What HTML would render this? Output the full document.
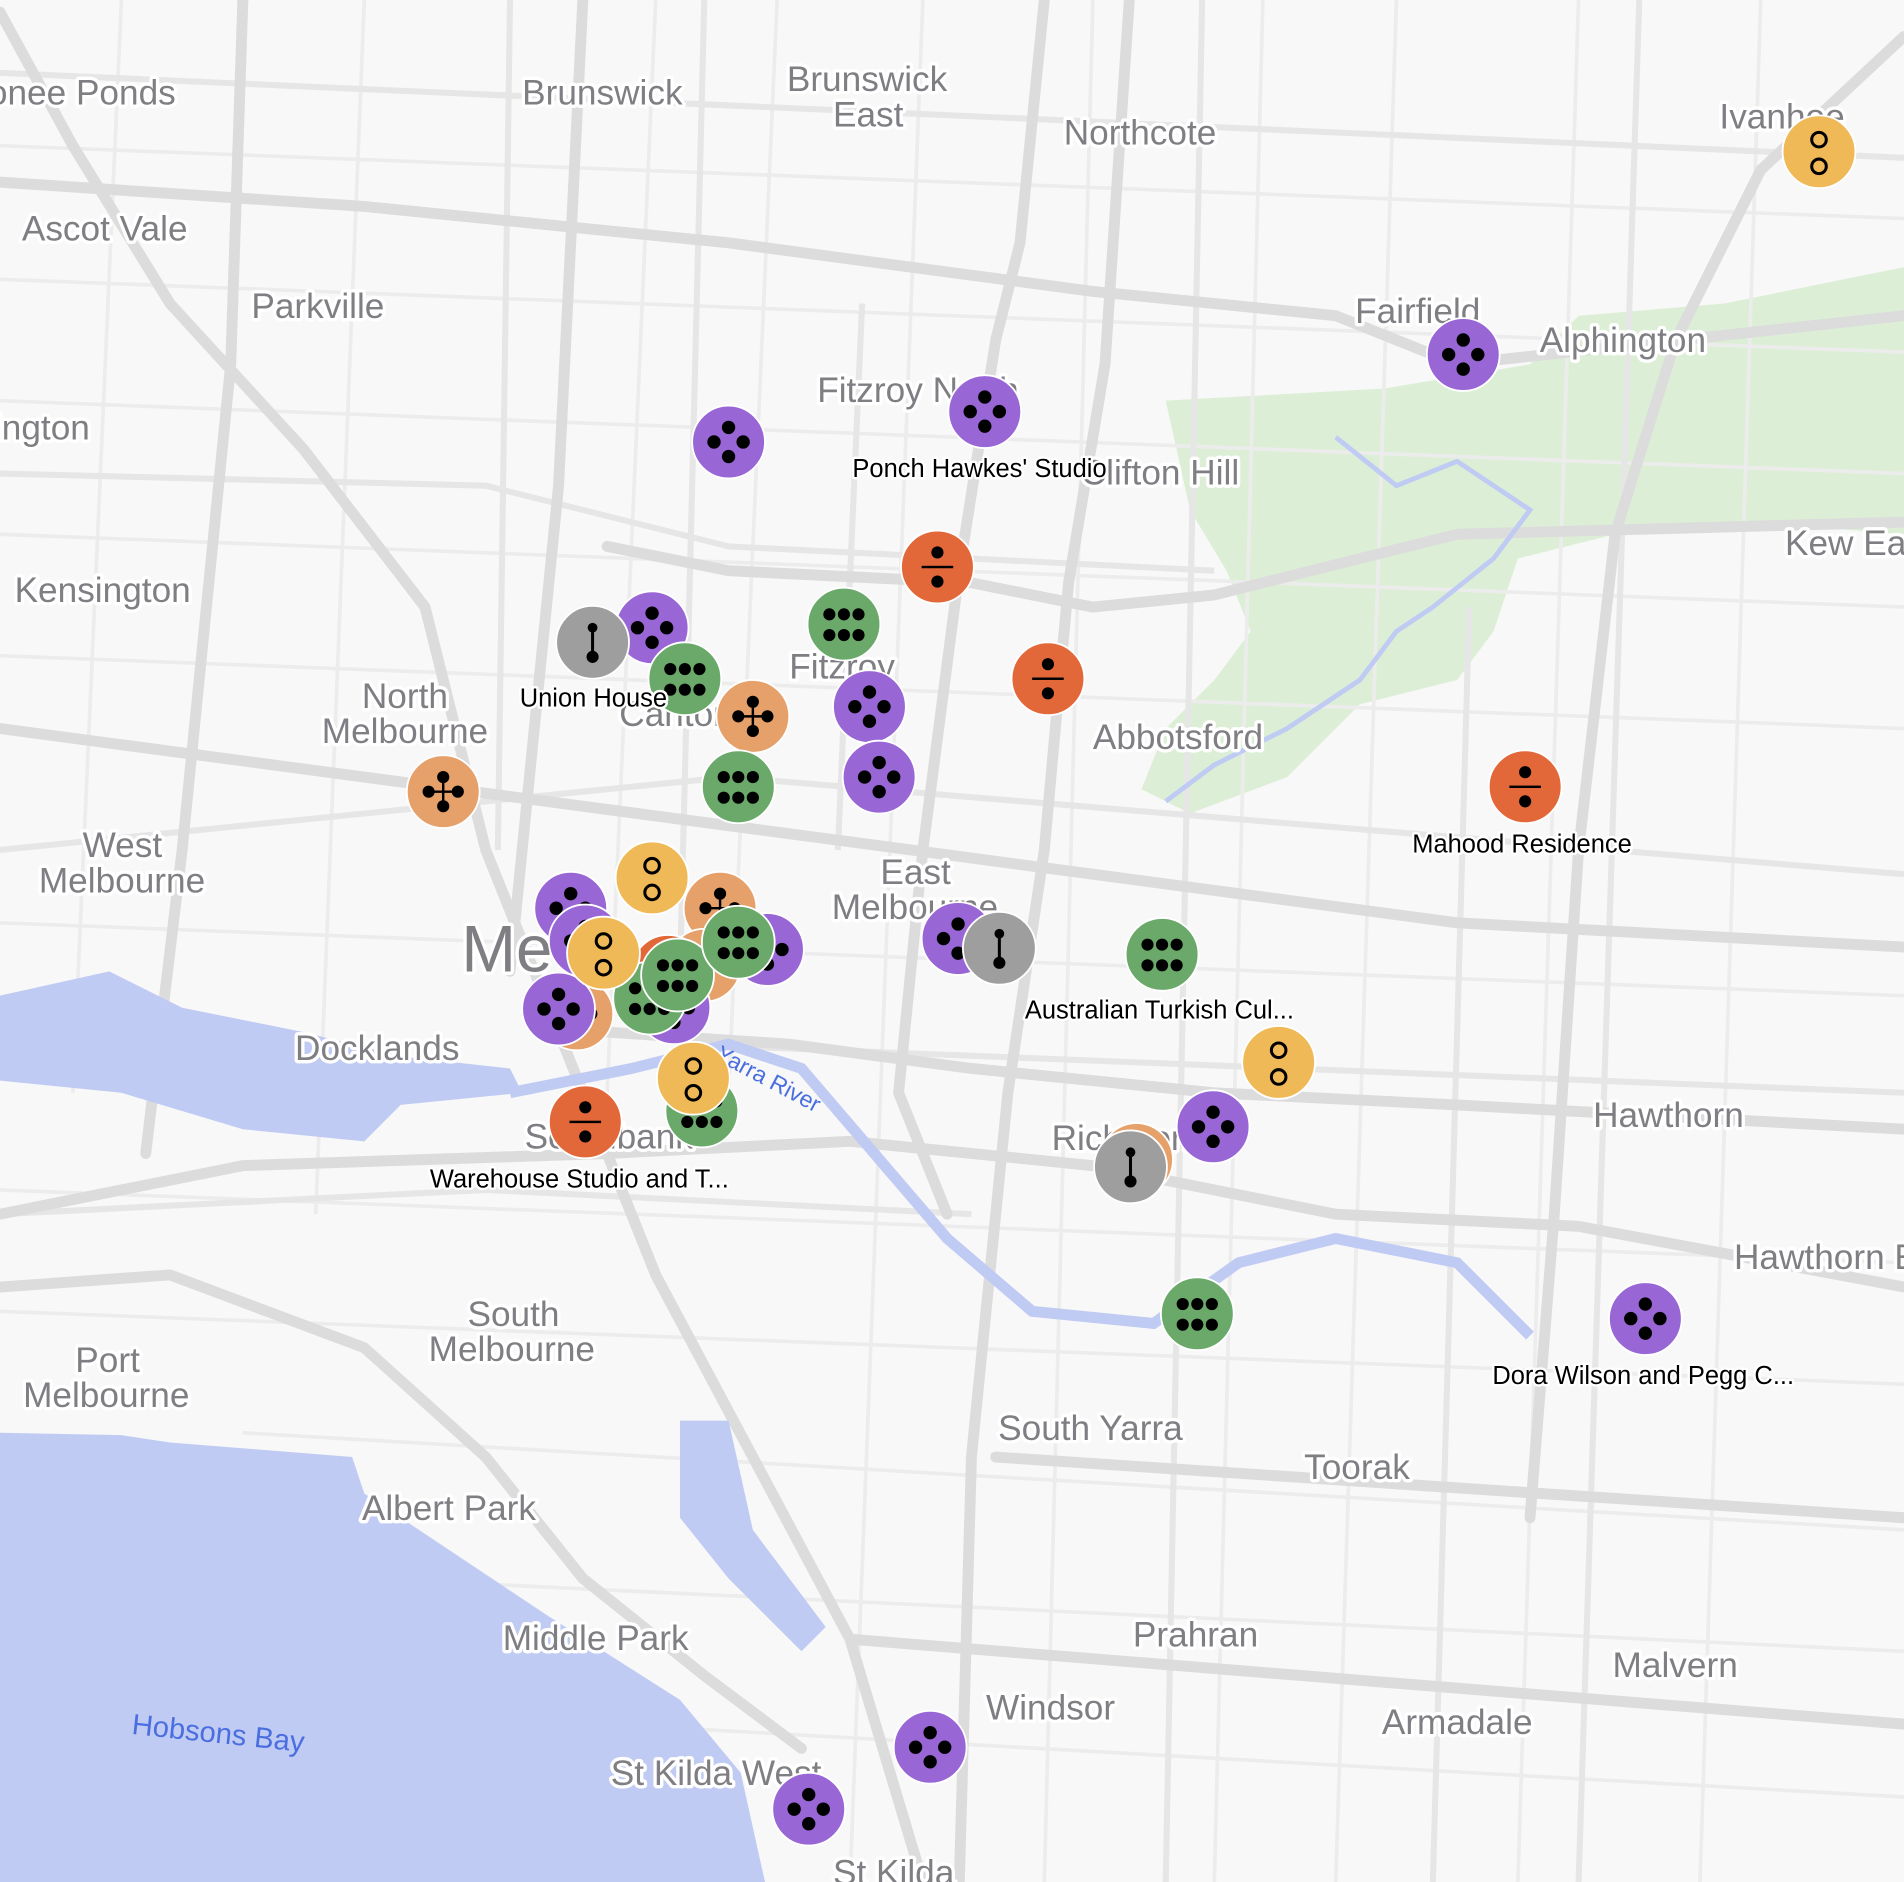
<!DOCTYPE html>
<html><head><meta charset="utf-8"><style>
html,body{margin:0;padding:0;background:#f8f8f8;}
svg{display:block;}
.area{font-family:"Liberation Sans",sans-serif;font-size:29px;fill:#7e7e83;stroke:#fff;stroke-width:5.5px;paint-order:stroke;stroke-linejoin:round;}
.lbl{font-family:"Liberation Sans",sans-serif;font-size:21px;fill:#000;stroke:#fff;stroke-width:4px;paint-order:stroke;stroke-linejoin:round;}
.maj{fill:none;stroke:#dcdcdc;stroke-width:9;stroke-linecap:round;stroke-linejoin:round;}
.mid{fill:none;stroke:#e6e6e6;stroke-width:5;}
.min{fill:none;stroke:#ececec;stroke-width:3;}
</style></head><body>
<svg width="1904" height="1882" viewBox="0 0 1568 1550" preserveAspectRatio="none" xmlns="http://www.w3.org/2000/svg">
<defs>
<g id="pu"><circle r="30" fill="#9966d6" stroke="#fff" stroke-width="1.5"/><circle cx="0" cy="-12" r="5.5"/><circle cx="-12" cy="0" r="5.5"/><circle cx="12" cy="0" r="5.5"/><circle cx="0" cy="12" r="5.5"/></g>
<g id="gr"><circle r="30" fill="#6aa96a" stroke="#fff" stroke-width="1.5"/><circle cx="-12" cy="-8" r="5"/><circle cx="0" cy="-8" r="5"/><circle cx="12" cy="-8" r="5"/><circle cx="-12" cy="9" r="5"/><circle cx="0" cy="9" r="5"/><circle cx="12" cy="9" r="5"/></g>
<g id="ye"><circle r="30" fill="#f0b957" stroke="#fff" stroke-width="1.5"/><circle cx="0" cy="-10" r="6" fill="none" stroke="#000" stroke-width="2.5"/><circle cx="0" cy="12" r="6" fill="none" stroke="#000" stroke-width="2.5"/></g>
<g id="re"><circle r="30" fill="#e2683a" stroke="#fff" stroke-width="1.5"/><circle cx="0" cy="-12" r="5"/><rect x="-13" y="-1" width="26" height="2"/><circle cx="0" cy="12" r="5"/></g>
<g id="or"><circle r="30" fill="#e6a06a" stroke="#fff" stroke-width="1.5"/><path d="M0-12V12M-12 0H12" stroke="#000" stroke-width="2"/><circle cx="0" cy="-12" r="5"/><circle cx="-12" cy="0" r="5"/><circle cx="12" cy="0" r="5"/><circle cx="0" cy="12" r="5"/></g>
<g id="gy"><circle r="30" fill="#9e9e9e" stroke="#fff" stroke-width="1.5"/><path d="M0-12V12" stroke="#000" stroke-width="2.5"/><circle cx="0" cy="-12" r="4"/><circle cx="0" cy="12" r="5"/></g>
</defs>
<rect width="1568" height="1550" fill="#f8f8f8"/>
<path d="M960 330 L1140 320 L1260 300 L1300 260 L1420 250 L1568 220 L1568 440 L1440 430 L1330 440 L1250 460 L1230 520 L1200 560 L1120 580 L1060 640 L980 670 L940 650 L960 600 L1000 560 L1030 520 L1010 470 L980 420 Z" fill="#dcefd6"/>
<g class="min">
<path d="M0 120 L1568 180 M0 230 L1568 290 M0 330 L1568 390 M0 440 L1568 500 M0 540 L1568 600 M0 760 L1568 820 M0 980 L1568 1040 M0 1080 L1568 1140 M200 1180 L1568 1260 M300 1300 L1568 1360 M500 1420 L1568 1480"/>
<path d="M100 0 L60 900 M300 0 L260 1000 M540 0 L500 900 M640 0 L600 900 M760 0 L700 1550 M900 0 L860 1550 M1040 0 L1000 1550 M1150 0 L1100 1550 M1300 0 L1250 1550 M1450 0 L1400 1550"/>
</g>
<g class="mid">
<path d="M0 60 L1568 130 M0 390 L400 400 L600 450 L1000 470 M0 700 L600 640 L1568 720 M560 860 L1568 900 M0 1000 L400 980 L800 1000"/>
<path d="M420 0 L410 700 M580 0 L560 800 M710 250 L690 700 M990 0 L960 1550 M1210 500 L1180 1550 M1350 0 L1300 1550"/>
</g>
<g class="maj">
<path d="M0 150 L300 170 L600 200 L900 240 L1100 260 L1200 300 L1568 260"/>
<path d="M860 0 L840 200 L820 280 L790 470 L760 700 L740 900 L780 1000"/>
<path d="M930 0 L910 300 L880 480 L860 700 L830 900 L800 1200 L790 1550"/>
<path d="M480 0 L470 200 L460 400 L440 600 L420 800"/>
<path d="M200 0 L190 300 L170 500 L150 700 L120 950"/>
<path d="M0 10 L60 120 L140 250 L250 370 L350 500 L400 700 L480 900 L540 1050 L620 1200 L700 1350 L760 1550"/>
<path d="M500 450 L600 470 L800 480 L900 500 L1000 490 L1200 440 L1568 430"/>
<path d="M0 600 L300 640 L600 680 L900 720 L1200 760 L1568 780"/>
<path d="M0 1000 L200 960 L500 950 L700 940 L900 960 L1100 1000 L1300 1010 L1568 1060"/>
<path d="M0 1060 L140 1050 L300 1110 L400 1200 L480 1300 L580 1380 L660 1440"/>
<path d="M500 850 L650 860 L800 880 L1000 900 L1200 910 L1568 930"/>
<path d="M1568 30 L1450 140 L1380 280 L1330 440 L1300 700 L1280 1000 L1260 1250"/>
<path d="M820 1200 L1568 1250 M700 1350 L1568 1420"/>
</g>
<path d="M0 1180 L100 1182 L140 1188 L290 1200 L300 1230 L450 1330 L560 1400 L610 1460 L630 1550 L0 1550 Z" fill="#c0cbf3"/>
<path d="M0 820 L90 800 L150 830 L250 850 L330 870 L420 880 L430 900 L330 910 L300 940 L200 930 L100 900 L0 890 Z" fill="#c0cbf3"/>
<path d="M420 900 L520 880 L600 860 L660 880 L720 950 L780 1020 L850 1080 L950 1090 L1020 1040 L1100 1020 L1200 1040 L1260 1100" fill="none" stroke="#c0cbf3" stroke-width="9"/>
<path d="M560 1170 L600 1170 L620 1260 L680 1340 L660 1360 L600 1300 L560 1250 Z" fill="#c0cbf3"/>
<path d="M1100 360 L1150 400 L1200 380 L1260 420 L1230 460 L1180 500 L1150 520 L1120 560 L1060 600 L1000 630 L960 660" fill="none" stroke="#c0cbf3" stroke-width="4"/>
<g class="area">
<text x="-10" y="86">onee Ponds</text><text x="430" y="86">Brunswick</text><text x="648" y="75">Brunswick</text><text x="686" y="104">East</text><text x="876" y="119">Northcote</text><text x="1416" y="106">Ivanhoe</text>
<text x="18" y="198">Ascot Vale</text><text x="207" y="262">Parkville</text><text x="1116" y="266">Fairfield</text><text x="1268" y="290">Alphington</text>
<text x="673" y="331">Fitzroy North</text><text x="-5" y="362">ington</text><text x="890" y="399">Clifton Hill</text><text x="1470" y="457">Kew Eas</text>
<text x="12" y="496">Kensington</text><text x="650" y="559">Fitzroy</text><text x="298" y="583">North</text><text x="265" y="612">Melbourne</text><text x="510" y="598">Carlton</text><text x="900" y="617">Abbotsford</text>
<text x="68" y="706">West</text><text x="32" y="735">Melbourne</text><text x="725" y="728">East</text><text x="685" y="757">Melbourne</text>
<text x="380" y="800" style="font-size:54px">Me</text><text x="243" y="873">Docklands</text><text x="432" y="946">Southbank</text><text x="866" y="947">Richmond</text><text x="1312" y="928">Hawthorn</text><text x="1428" y="1045">Hawthorn E</text>
<text x="385" y="1092">South</text><text x="353" y="1121">Melbourne</text><text x="62" y="1130">Port</text><text x="19" y="1159">Melbourne</text><text x="822" y="1186">South Yarra</text><text x="1074" y="1218">Toorak</text>
<text x="298" y="1252">Albert Park</text><text x="414" y="1359">Middle Park</text><text x="933" y="1356">Prahran</text><text x="1328" y="1381">Malvern</text><text x="812" y="1416">Windsor</text><text x="1138" y="1428">Armadale</text><text x="503" y="1470">St Kilda West</text><text x="686" y="1552">St Kilda</text>
</g>
<text x="108" y="1428" transform="rotate(6 108 1428)" style="font-family:'Liberation Sans',sans-serif;font-size:24px;fill:#4a6ee0">Hobsons Bay</text>
<text x="588" y="872" transform="rotate(28 588 872)" style="font-family:'Liberation Sans',sans-serif;font-size:19px;fill:#4a6ee0">Yarra River</text>
<use href="#pu" x="600" y="364"/><use href="#pu" x="811" y="339"/><use href="#pu" x="1205" y="292"/><use href="#ye" x="1498" y="125"/>
<use href="#re" x="772" y="467"/><use href="#gr" x="695" y="514"/><use href="#pu" x="537" y="517"/><use href="#gy" x="488" y="529"/><use href="#gr" x="564" y="559"/>
<use href="#re" x="863" y="559"/><use href="#pu" x="716" y="582"/><use href="#or" x="620" y="590"/><use href="#pu" x="724" y="640"/><use href="#gr" x="608" y="648"/>
<use href="#or" x="365" y="652"/><use href="#re" x="1256" y="648"/>
<use href="#pu" x="632" y="782"/><use href="#or" x="593" y="748"/><use href="#or" x="580" y="795"/><use href="#re" x="550" y="800"/><use href="#pu" x="555" y="830"/><use href="#gr" x="535" y="822"/>
<use href="#pu" x="470" y="748"/><use href="#pu" x="482" y="775"/><use href="#or" x="475" y="835"/><use href="#pu" x="460" y="831"/>
<use href="#ye" x="537" y="723"/><use href="#ye" x="497" y="785"/><use href="#gr" x="558" y="803"/><use href="#gr" x="608" y="776"/>
<use href="#pu" x="789" y="773"/><use href="#gy" x="823" y="781"/><use href="#gr" x="957" y="786"/>
<use href="#gr" x="578" y="915"/><use href="#ye" x="571" y="888"/><use href="#re" x="482" y="924"/><use href="#ye" x="1053" y="875"/>
<use href="#or" x="936" y="955"/><use href="#gy" x="931" y="961"/><use href="#pu" x="999" y="928"/>
<use href="#gr" x="986" y="1082"/><use href="#pu" x="1355" y="1086"/><use href="#pu" x="766" y="1439"/><use href="#pu" x="666" y="1490"/>
<g class="lbl">
<text x="702" y="393">Ponch Hawkes' Studio</text><text x="428" y="582">Union House</text><text x="1163" y="702">Mahood Residence</text>
<text x="844" y="839">Australian Turkish Cul...</text><text x="354" y="978">Warehouse Studio and T...</text><text x="1229" y="1140">Dora Wilson and Pegg C...</text>
</g>
</svg>
</body></html>
